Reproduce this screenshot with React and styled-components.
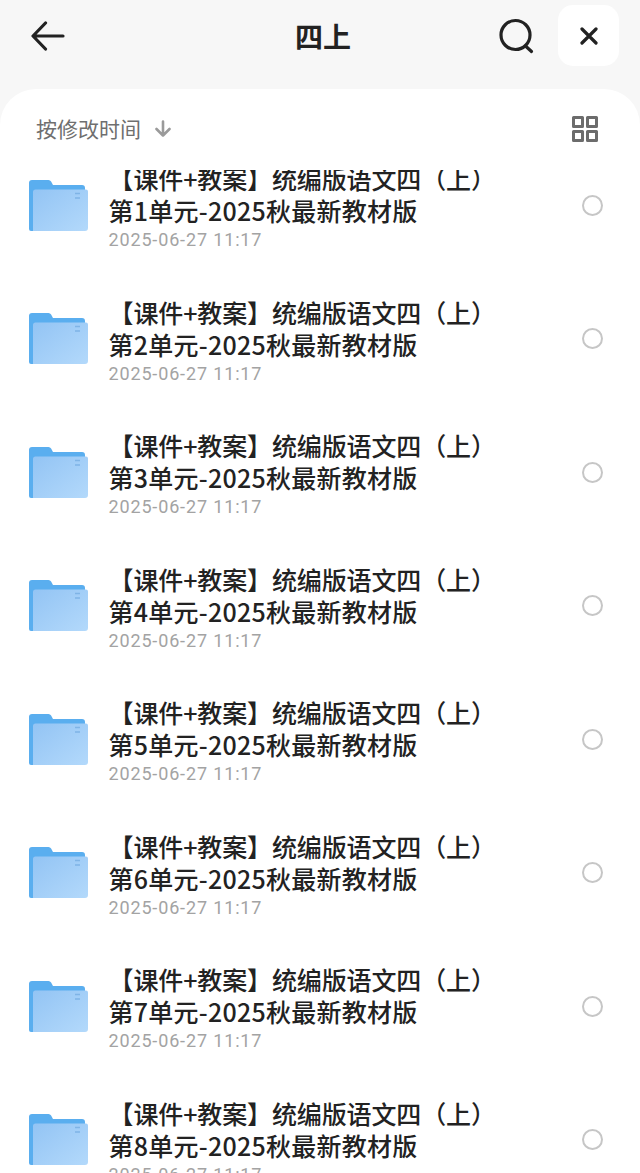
import React from "react";
import styled, { createGlobalStyle } from "styled-components";

const Global = createGlobalStyle`
  html, body { margin: 0; padding: 0; background: #f7f7f7; }
  body { font-family: "Noto Sans CJK SC", "Noto Sans", sans-serif; }
`;
const Page = styled.div`
  width: 640px; height: 1173px; overflow: hidden; display: flex; flex-direction: column; background: #f7f7f7;
`;
const Header = styled.header`
  height: 89px; flex: none; display: flex; align-items: flex-start; padding: 5px 21px 0 31px; box-sizing: border-box;
`;
const IconSlot = styled.div`
  height: 62px; display: flex; align-items: center; justify-content: center; flex: none;
`;
const Title = styled.h1`
  flex: 1; margin: 0; height: 62px; line-height: 62px; text-align: center; font-size: 28px; font-weight: 700; color: #222; padding-left: 83px;
`;
const CloseBtn = styled.button`
  width: 61px; height: 61px; margin-left: 24px; border: 0; padding: 0; border-radius: 15px; background: #fff; display: flex; align-items: center; justify-content: center;
`;
const Panel = styled.main`
  flex: 1; min-height: 0; background: #fff; border-radius: 36px 36px 0 0; display: flex; flex-direction: column;
`;
const SortBar = styled.div`
  height: 81px; flex: none; display: flex; align-items: center; justify-content: space-between; padding: 0 42px 2px 36px; box-sizing: border-box;
`;
const SortLabel = styled.div`
  display: flex; align-items: center; gap: 14px; font-size: 21px; color: #6f6f6f; line-height: 1;
`;
const List = styled.div`
  flex: 1; min-height: 0; overflow: hidden;
`;
const Rows = styled.div`
  margin-top: -32px; display: grid; grid-auto-rows: 133.5px;
`;
const Row = styled.div`
  display: flex; align-items: center; padding: 0 37px 0 28px;
`;
const Texts = styled.div`
  flex: 1; margin-left: 20.5px; min-width: 0; padding-top: 4px;
`;
const Name = styled.div`
  font-size: 25px; line-height: 32px; color: #222; font-weight: 500; white-space: nowrap;
  letter-spacing: ${(p) => p.$spacing}px;
`;
const DateText = styled.div`
  font-family: Roboto, sans-serif; font-size: 18px; line-height: 22px; color: #a3a3a3; letter-spacing: 0.85px; margin-top: 3px;
`;
const Radio = styled.span`
  width: 17px; height: 17px; border: 2px solid #c6c6c6; border-radius: 50%; flex: none; margin-top: 1px;
`;

const Back = () => (
  <svg width="34" height="30" viewBox="0 0 34 30" fill="none" stroke="#222" strokeWidth="3.2" strokeLinecap="round" strokeLinejoin="round">
    <path d="M32 15H3M14.500 2L2 15l12.500 13" />
  </svg>
);
const Search = () => (
  <svg width="36" height="36" viewBox="0 0 36 36" fill="none" stroke="#222" strokeWidth="3.2" strokeLinecap="round">
    <circle cx="17.500" cy="17" r="14.500" />
    <path d="M27.500 28l6 5.500" />
  </svg>
);
const Close = () => (
  <svg width="18" height="18" viewBox="0 0 18 18" fill="none" stroke="#222" strokeWidth="3.2" strokeLinecap="round">
    <path d="M2 2l14 14M16 2L2 16" />
  </svg>
);
const Arrow = () => (
  <svg width="16" height="17" viewBox="0 0 16 17" fill="none" stroke="#9a9a9a" strokeWidth="2.600" strokeLinecap="round" strokeLinejoin="round">
    <path d="M8 1.500v14M1.500 9l6.500 6.500L14.500 9" />
  </svg>
);
const Grid = () => (
  <svg width="26" height="26" viewBox="0 0 26 26" fill="none" stroke="#6c6c6c" strokeWidth="3" strokeLinejoin="round">
    <rect x="1.500" y="1.500" width="9" height="9" />
    <rect x="15.500" y="1.500" width="9" height="9" />
    <rect x="1.500" y="15.500" width="9" height="9" />
    <rect x="15.500" y="15.500" width="9" height="9" />
  </svg>
);
const Folder = ({ id }) => (
  <svg width="60" height="54" viewBox="0 0 60 54" style={{ flex: "none" }}>
    <defs>
      <linearGradient id={id} x1="0" y1="0" x2="1" y2="1">
        <stop offset="0" stopColor="#93c4f4" />
        <stop offset="1" stopColor="#b3d9fb" />
      </linearGradient>
    </defs>
    <path d="M1 5a3 3 0 0 1 3-3h16.500a3 3 0 0 1 2.600 1.500L25 7h29a3 3 0 0 1 3 3v40a3 3 0 0 1-3 3H3a2 2 0 0 1-2-2z" fill="#5aaeef" />
    <path d="M5 14a2.500 2.500 0 0 1 2.500-2.500H58a2 2 0 0 1 2 2V50a3 3 0 0 1-3 3H5z" fill={`url(#${id})`} />
    <path d="M47 15.500h5M47 20h5" stroke="#7fb4e6" strokeWidth="1.400" />
  </svg>
);

const units = [1, 2, 3, 4, 5, 6, 7, 8];

export default function App() {
  return (
    <Page>
      <Global />
      <Header>
        <IconSlot><Back /></IconSlot>
        <Title>四上</Title>
        <IconSlot><Search /></IconSlot>
        <CloseBtn aria-label="关闭"><Close /></CloseBtn>
      </Header>
      <Panel>
        <SortBar>
          <SortLabel>按修改时间<Arrow /></SortLabel>
          <Grid />
        </SortBar>
        <List>
          <Rows>
            {units.map((n) => (
              <Row key={n}>
                <Folder id={`folder-${n}`} />
                <Texts>
                  <Name $spacing={-0.12}>【课件+教案】统编版语文四（上）</Name>
                  <Name $spacing={0.25}>第{n}单元-2025秋最新教材版</Name>
                  <DateText>2025-06-27 11:17</DateText>
                </Texts>
                <Radio />
              </Row>
            ))}
          </Rows>
        </List>
      </Panel>
    </Page>
  );
}
